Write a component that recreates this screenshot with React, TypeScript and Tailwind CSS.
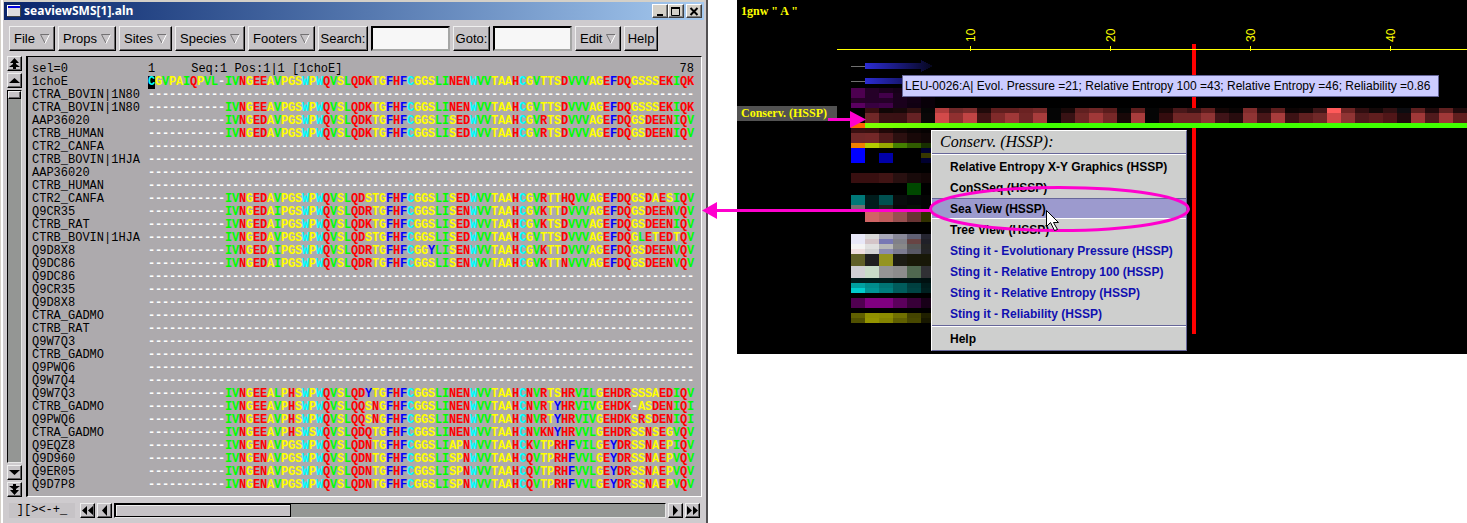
import type { ReactNode } from "react";

const residueColors: Record<string, string> = {
  A: "text-[#ffff00]", G: "text-[#ffff00]", P: "text-[#ffff00]", S: "text-[#ffff00]", T: "text-[#ffff00]",
  I: "text-[#00ff00]", L: "text-[#00ff00]", V: "text-[#00ff00]",
  D: "text-[#ff0000]", E: "text-[#ff0000]", H: "text-[#ff0000]", K: "text-[#ff0000]",
  N: "text-[#ff0000]", Q: "text-[#ff0000]", R: "text-[#ff0000]",
  F: "text-[#0000ff]", Y: "text-[#0000ff]",
  C: "text-[#00ffff]", W: "text-[#00ffff]",
};

const gap = "-".repeat(11);
const empty = "-".repeat(78);

const sequences: [string, string][] = [
  ["1choE", "CGVPAIQPVL-IVNGEEAVPGSWPWQVSLQDKTGFHFCGGSLINENWVVTAAHCGVTTSDVVVAGEFDQGSSSEKIQK"],
  ["CTRA_BOVIN|1N80", empty],
  ["CTRA_BOVIN|1N80", gap + "IVNGEEAVPGSWPWQVSLQDKTGFHFCGGSLINENWVVTAAHCGVTTSDVVVAGEFDQGSSSEKIQK"],
  ["AAP36020", gap + "IVNGEDAVPGSWPWQVSLQDKTGFHFCGGSLISEDWVVTAAHCGVRTSDVVVAGEFDQGSDEENIQV"],
  ["CTRB_HUMAN", gap + "IVNGEDAVPGSWPWQVSLQDKTGFHFCGGSLISEDWVVTAAHCGVRTSDVVVAGEFDQGSDEENIQV"],
  ["CTR2_CANFA", empty],
  ["CTRB_BOVIN|1HJA", empty],
  ["AAP36020", empty],
  ["CTRB_HUMAN", empty],
  ["CTR2_CANFA", gap + "IVNGEDAVPGSWPWQVSLQDSTGFHFCGGSLISEDWVVTAAHCGVRTTHQVVAGEFDQGSDAESIQV"],
  ["Q9CR35", gap + "IVNGEDAIPGSWPWQVSLQDRTGFHFCGGSLISENWVVTAAHCGVKTTDVVVAGEFDQGSDEENVQV"],
  ["CTRB_RAT", gap + "IVNGEDAIPGSWPWQVSLQDKTGFHFCGGSLISEDWVVTAAHCGVKTSDVVVAGEFDQGSDEENIQV"],
  ["CTRB_BOVIN|1HJA", gap + "IVNGEDAVPGSWPWQVSLQDSTGFHFCGGSLISEDWVVTAAHCGVTTSDVVVAGEFDQGLETEDTQV"],
  ["Q9D8X8", gap + "IVNGEDAIPGSWPWQVSLQDRTGFHFCGGYLISENWVVTAAHCGVKTTDVVVAGEFDQGSDEENVQV"],
  ["Q9DC86", gap + "IVNGEDAIPGSWPWQVSLQDRTGFHFCGGSLISENWVVTAAHCGVKTTNVVVAGEFDQGSDEENVQV"],
  ["Q9DC86", empty],
  ["Q9CR35", empty],
  ["Q9D8X8", empty],
  ["CTRA_GADMO", empty],
  ["CTRB_RAT", empty],
  ["Q9W7Q3", empty],
  ["CTRB_GADMO", empty],
  ["Q9PWQ6", empty],
  ["Q9W7Q4", empty],
  ["Q9W7Q3", gap + "IVNGEEALPHSWPWQVSLQDYTGFHFCGGSLINENWVVTAAHCNVRTSHRVILGEHDRSSSAEDIQV"],
  ["CTRB_GADMO", gap + "IVNGEEAVPHSWPWQVSLQQSNGFHFCGGSLINENWVVTAAHCNVRTYHRVIVGEHDK-ASDENIQI"],
  ["Q9PWQ6", gap + "IVNGEEAVPHSWPWQVSLQQSNGFHFCGGSLINENWVVTAAHCNVRTYHRVIVGEHDKSRSDENIQI"],
  ["CTRA_GADMO", gap + "IVNGEEAVPHSWSWQVSLQDQTGFHFCGGSLINENWVVTAAHCNVKNYHRVVLGEHDRSSNSEGVQV"],
  ["Q9EQZ8", gap + "IVNGENAVPGSWPWQVSLQDNTGFHFCGGSLIAPNWVVTAAHCKVTPRHFVILGEYDRSSNAEPIQV"],
  ["Q9D960", gap + "IVNGENAVPGSWPWQVSLQDNTGFHFCGGSLISPNWVVTAAHCQVTPRHFVVLGEYDRSSNAEPVQV"],
  ["Q9ER05", gap + "IVNGENAVPGSWPWQVSLQDNTGFHFCGGSLISPNWVVTAAHCQVTPRHFVVLGEYDRSSNAEPVQV"],
  ["Q9D7P8", gap + "IVNGENAVPGSWPWQVSLQDNTGFHFCGGSLISPNWVVTAAHCQVTPRHFVVLGEYDRSSNAEPVQV"],
];

const bevel = "border border-t-[#efefef] border-l-[#efefef] border-r-black border-b-black shadow-[inset_-1px_-1px_0_#636163] bg-[#c6c3c6]";

function ToolButton({ label, width, menu }: { label: string; width: string; menu?: boolean }) {
  return (
    <button className={`flex h-[25px] items-center text-[13px] leading-none text-black ${menu ? "justify-between px-1" : "justify-center"} ${bevel} ${width}`}>
      {label}
      {menu && (
        <svg width="10" height="10" viewBox="0 0 10 10" fill="none" aria-hidden="true">
          <path d="M9.5 .5H.5L5 9" stroke="#737173" />
          <path d="M9.5 .5L5 9.5" stroke="#fff" />
        </svg>
      )}
    </button>
  );
}

function ScrollButton({ label, path }: { label: string; path: string }) {
  return (
    <button aria-label={label} className={`flex size-[15px] shrink-0 items-center justify-center ${bevel}`}>
      <svg width="11" height="11" viewBox="0 0 11 11" className="shrink-0" aria-hidden="true">
        <path d={path} fill="#000" />
      </svg>
    </button>
  );
}

function WindowButton({ label, children }: { label: string; children: ReactNode }) {
  return (
    <button aria-label={label} className="flex h-[14px] w-4 items-center justify-center border border-t-white border-l-white border-r-[#404040] border-b-[#404040] bg-[#d4d0c8] shadow-[inset_-1px_-1px_0_#808080]">
      <svg width="10" height="9" viewBox="0 0 10 9" className="shrink-0" aria-hidden="true">{children}</svg>
    </button>
  );
}

function SeaView() {
  return (
    <section className="shrink-0 border-l border-[#d4d0c8] border-r-2 border-r-[#525052] bg-[#cecbce] pr-[2px]">
      <div className="border-l-2 border-l-white pl-px">
        <header className="flex h-5 items-center border-t-2 border-[#d4d0c8] bg-linear-to-r from-[#0a246a] to-[#a6caf0] pr-[2px] pl-[3px]">
          <svg width="14" height="12" viewBox="0 0 14 12" aria-hidden="true">
            <rect x=".5" y=".5" width="13" height="11" fill="#dedbde" stroke="#fff" />
            <path d="M1 1h12v2H1z" fill="#0000de" />
            <path d="M0 11.500h14M13.500 0v12" stroke="#424142" />
          </svg>
          <h1 className="ml-[3px] flex-1 font-['Noto_Sans',sans-serif] text-[12px] leading-none font-bold text-white">seaviewSMS[1].aln</h1>
          <div className="flex">
            <WindowButton label="Minimize"><path d="M2 7h6v2H2z" /></WindowButton>
            <WindowButton label="Maximize"><path d="M.5 1.500h8v7h-8z" fill="none" stroke="#000" /><path d="M0 0h9v2H0z" /></WindowButton>
            <div className="ml-[2px] flex">
              <WindowButton label="Close"><path d="M1.500 1l7 7M8.500 1l-7 7" stroke="#000" strokeWidth="2" /></WindowButton>
            </div>
          </div>
        </header>

        {/* menu bar */}
        <div className="flex gap-[3px] pt-[6px] pl-[5px]">
          <ToolButton label="File" width="w-[46px]" menu />
          <ToolButton label="Props" width="w-[58px]" menu />
          <ToolButton label="Sites" width="w-[53px]" menu />
          <ToolButton label="Species" width="w-[70px]" menu />
          <ToolButton label="Footers" width="w-[67px]" menu />
          <ToolButton label="Search:" width="w-[50px]" />
          <input aria-label="Search" className="h-[25px] w-[79px] border-2 border-t-black border-l-black border-r-[#a5a6a5] border-b-[#a5a6a5] bg-[#f7f7f7] px-1 text-[13px]" />
          <ToolButton label="Goto:" width="w-[37px]" />
          <input aria-label="Goto" className="h-[25px] w-[79px] border-2 border-t-black border-l-black border-r-[#a5a6a5] border-b-[#a5a6a5] bg-[#f7f7f7] px-1 text-[13px]" />
          <ToolButton label="Edit" width="w-[46px]" menu />
          <ToolButton label="Help" width="w-[34px]" />
        </div>

        <div className="flex gap-1 pt-[5px] pr-[2px] pl-[3px]">
          <div className="flex flex-col gap-[2px]">
            <ScrollButton label="First sequence" path="M5.500 0L1 5h3v1L0 9h4v2h3V9h4L7 6V5h3z" />
            <ScrollButton label="Scroll up" path="M5.500 3L0 8h11z" />
            <div className="flex-1 border border-t-black border-l-black border-r-[#e7e7e7] border-b-[#e7e7e7] bg-[#949694]">
              <div className={`h-[8px] ${bevel}`} />
            </div>
            <ScrollButton label="Scroll down" path="M5.500 8L0 3h11z" />
            <ScrollButton label="Last sequence" path="M5.500 11L1 6h3V5L0 2h4V0h3v2h4L7 5v1h3z" />
          </div>

          <div className="border-t border-r border-b border-l-2 border-t-black border-r-white border-b-white border-l-black bg-[#adaaad] pt-[6px] pr-[7px] pb-1 pl-1 font-['Liberation_Mono',monospace] text-[12px] leading-[13px]">
            <div className="flex whitespace-pre">
              <span className="w-[116px]">sel=0</span>
              <span className="flex-1">1     Seq:1 Pos:1|1 [1choE]</span>
              <span>78</span>
            </div>
            {sequences.map(([name, residues], i) => (
              <div key={i} className="flex h-[13px]">
                <span className="w-[116px]">{name}</span>
                <div className="flex font-bold">
                  {residues.split("").map((r, j) => (
                    <span
                      key={j}
                      className={`flex w-[7px] justify-center ${residueColors[r] ?? "text-white"} ${i === 0 && j === 0 ? "bg-black" : ""}`}
                    >
                      {r}
                    </span>
                  ))}
                </div>
              </div>
            ))}
          </div>
        </div>

        <div className="flex items-center gap-[2px] pt-[6px] pr-1 pb-[5px] pl-[5px]">
          <span className="mr-[3px] w-[66px] bg-[#c6c3c6] text-center font-['Liberation_Mono',monospace] text-[12px] leading-[15px]">{"][><-+_"}</span>
          <ScrollButton label="First site" path="M0 5.500L5 1v9zM6 5.500L11 1v9z" />
          <ScrollButton label="Scroll left" path="M3 5.500L8 0v11z" />
          <div className="h-[15px] flex-1 border border-t-black border-l-black border-r-[#e7e7e7] border-b-[#e7e7e7] bg-[#949694]">
            <div className="h-[13px] w-[176px] border border-black bg-[#c6c3c6] shadow-[inset_1px_1px_0_#efefef]" />
          </div>
          <ScrollButton label="Scroll right" path="M8 5.500L3 0v11z" />
          <ScrollButton label="Last site" path="M5 5.500L0 1v9zM11 5.500L6 1v9z" />
        </div>
      </div>
    </section>
  );
}

// [top half, bottom half] of every residue in the conservation band
const conservation = [
  ["#000", "#000"], ["#380f10", "#702828"], ["#100606", "#3a1214"], ["#160808", "#3a1114"], ["#301010", "#662224"],
  ["#060606", "#0a0808"], ["#b03c3c", "#d24a4a"], ["#6e2828", "#903030"], ["#7c2c2c", "#c04444"], ["#200a0a", "#401414"],
  ["#601e1e", "#802a2a"], ["#601e1e", "#a03838"], ["#6a2222", "#702626"], ["#762828", "#a83c3c"], ["#050505", "#050505"],
  ["#180808", "#381214"], ["#602020", "#702626"], ["#6e2626", "#a03838"], ["#5a1c1c", "#782828"], ["#050505", "#180808"],
  ["#601e1e", "#a83c3c"], ["#050505", "#050505"], ["#180606", "#340c0e"], ["#4a181a", "#702626"], ["#381214", "#702626"],
  ["#601e1e", "#903434"], ["#140606", "#401418"], ["#080404", "#280c0e"], ["#802c2c", "#903434"], ["#200a0c", "#481618"],
  ["#601e1e", "#a83c3c"], ["#0c0404", "#3c1214"], ["#100606", "#602020"], ["#401618", "#702828"], ["#ff5a5a", "#d24848"],
  ["#6e2424", "#903434"], ["#300e10", "#501a1c"], ["#120808", "#601e1e"], ["#301012", "#501618"], ["#0c0c10", "#200a0c"],
  ["#602020", "#a03838"], ["#200a0c", "#501a1c"], ["#602020", "#a03838"], ["#200a0c", "#601e1e"],
];

// property bands to the left of the menu: y, height, colour of each column
const bands: [number, number, string[]][] = [
  [88, 5, ["#4d0050", "#250028", "#1c001e", "#160018", "#100012", "#080008"]],
  [93, 5, ["#4d0050", "#250028", "#42004a", "#1a001c", "#120014", "#080008"]],
  [98, 5, ["#280028", "#250028", "#250028", "#1a001c", "#120014", "#080008"]],
  [103, 5, ["#5a0060", "#380040", "#400048", "#1a001c", "#100012", "#080008"]],
  [123, 5, ["#ff6600"]],
  [128, 5, ["#3a1012", "#38100f", "#200808", "#120606", "#0a0404", "#060202"]],
  [133, 10, ["#702828", "#742828", "#4e1a1a", "#2c1010", "#180808", "#100606"]],
  [143, 5, ["#f08000", "#b4cc00", "#98a800", "#448000", "#305c00", "#183000"]],
  [148, 5, ["#0000ff", "#000", "#000", "#000", "#000", "#000030"]],
  [153, 5, ["#0000ff", "#000", "#0000a8", "#000", "#000", "#383800"]],
  [158, 5, ["#0000ff", "#000", "#0000a8", "#000", "#000", "#000030"]],
  [173, 10, ["#380f10", "#380f10", "#401414", "#281010", "#180a0a", "#120606"]],
  [183, 12, ["#000", "#000", "#000", "#000", "#004800", "#000"]],
  [195, 10, ["#007878", "#001c1c", "#005050", "#080c0c", "#040808", "#040404"]],
  [205, 5, ["#707070", "#001c1c", "#202020", "#080808", "#061006", "#040404"]],
  [212, 10, ["#000", "#d06464", "#c05c5c", "#985050", "#683434", "#303000"]],
  [234, 5, ["#e8e8f8", "#d8d8d8", "#a8a8b8", "#888898", "#606074", "#242430"]],
  [239, 5, ["#e8e8f8", "#d4c4c8", "#7878b4", "#808088", "#684444", "#202028"]],
  [244, 5, ["#f4f4f4", "#e0e0e0", "#b8b8b8", "#888888", "#585858", "#242424"]],
  [249, 5, ["#f0e0e0", "#d4d4d4", "#8c8cb0", "#7c7c90", "#585864", "#242428"]],
  [254, 12, ["#606028", "#202020", "#949420", "#1c1c14", "#181808", "#181808"]],
  [266, 12, ["#d0d0d4", "#c8dcc8", "#949494", "#8c8c8c", "#506850", "#303034"]],
  [278, 5, ["#001c1c", "#001c1c", "#001c1c", "#001414", "#001414", "#001010"]],
  [283, 5, ["#00a0a0", "#008c8c", "#007474", "#005c5c", "#004040", "#001c1c"]],
  [288, 5, ["#00cccc", "#009494", "#007c7c", "#005c5c", "#004444", "#002020"]],
  [298, 10, ["#500050", "#800080", "#800080", "#5c005c", "#380038", "#180018"]],
  [313, 5, ["#606000", "#909000", "#8c8c00", "#707000", "#444400", "#202000"]],
  [318, 5, ["#505000", "#949400", "#848400", "#606000", "#484800", "#181800"]],
];

const ticks = [10, 20, 30, 40];

function Heatmap() {
  return (
    <svg width="100%" height="354" className="block" aria-hidden="true" shapeRendering="crispEdges">
      <defs>
        <linearGradient id="strand">
          <stop offset="0" stopColor="#2c2cd4" />
          <stop offset="1" stopColor="#06061c" />
        </linearGradient>
        <linearGradient id="reliability" gradientUnits="userSpaceOnUse" x1="128" x2="290">
          <stop offset="0" stopColor="#80ff00" />
          <stop offset="1" stopColor="#40ff00" />
        </linearGradient>
      </defs>

      <rect x="455" y="44" width="4" height="290" fill="#f00" />
      <rect x="100" y="49" width="100%" height="1" fill="#ff0" />
      {ticks.map((t) => (
        <g key={t} fill="#ff0">
          <rect x={93 + t * 14} y="46" width="1" height="5" />
          <text transform={`translate(${98 + t * 14} 42) rotate(-90)`} fontSize="12">{t}</text>
        </g>
      ))}

      <path d="M114 66.500h14M114 81.500h14" stroke="#707070" />
      <path d="M128 63h56v-3l12 6-12 6v-3h-56zM128 78h56v6h-56z" fill="url(#strand)" />

      {bands.map(([y, h, colors]) =>
        colors.map((c, i) => <rect key={`${y}-${i}`} x={114 + i * 14} y={y} width="14" height={h} fill={c} />)
      )}
      {conservation.map(([top, bottom], i) => (
        <g key={i}>
          <rect x={114 + i * 14} y="108" width="14" height="5" fill={top} />
          <rect x={114 + i * 14} y="113" width="14" height="10" fill={bottom} />
        </g>
      ))}
      <rect x="128" y="123" width="100%" height="5" fill="url(#reliability)" />
    </svg>
  );
}

const entries = [
  { label: "Relative Entropy X-Y Graphics (HSSP)", style: "border-transparent text-black" },
  { label: "ConSSeq (HSSP)", style: "border-transparent text-black" },
  { label: "Sea View (HSSP)", style: "border-t-[#666699] border-b-white bg-[#9c9ace] text-black" },
  { label: "Tree View (HSSP)", style: "border-transparent text-black" },
  { label: "Sting it - Evolutionary Pressure (HSSP)", style: "border-transparent text-[#1010b0]" },
  { label: "Sting it - Relative Entropy 100 (HSSP)", style: "border-transparent text-[#1010b0]" },
  { label: "Sting it - Relative Entropy (HSSP)", style: "border-transparent text-[#1010b0]" },
  { label: "Sting it - Reliability (HSSP)", style: "border-transparent text-[#1010b0]" },
];

const entryBase = "block h-[21px] w-full border-y pl-[18px] text-left text-[12px] leading-5 font-bold";

function ContextMenu() {
  return (
    <div className="absolute top-[130px] left-[194px] w-[256px] border border-t-white border-l-white border-r-[#666699] border-b-[#666699] bg-[#cecfce]">
      <h2 className="h-[22px] pl-2 font-['Liberation_Serif',serif] text-[16px] leading-[22px] text-black italic">Conserv. (HSSP):</h2>
      <div className="h-[2px] border-t border-b border-t-[#666699] border-b-white" />
      <ul className="py-px">
        {entries.map((e) => (
          <li key={e.label}>
            <button className={`${entryBase} ${e.style}`}>{e.label}</button>
          </li>
        ))}
      </ul>
      <div className="h-[2px] border-t border-b border-t-[#666699] border-b-white" />
      <div className="py-px">
        <button className={`${entryBase} border-transparent text-black`}>Help</button>
      </div>
    </div>
  );
}

function StingPanel() {
  return (
    <section className="relative ml-[29px] min-w-0 flex-1 overflow-hidden bg-black">
      <Heatmap />
      <h2 className="absolute top-[3px] left-1 font-['Liberation_Serif',serif] text-[12px] leading-4 font-bold text-[#ffff00]">1gnw &quot; A &quot;</h2>
      <div className="absolute top-[106px] left-0 w-[100px] bg-[#525252] pl-1 font-['Liberation_Serif',serif] text-[12px] leading-[15px] font-bold text-[#ffff00]">
        Conserv. (HSSP)
      </div>
      <div className="absolute top-[75px] left-[165px] border border-[#666699] bg-[#ccccff] pr-2 pl-[2px] text-[12px] leading-5 whitespace-nowrap text-black">
        LEU-0026:A| Evol. Pressure =21; Relative Entropy 100 =43; Relative Entropy =46; Reliability =0.86
      </div>
      <ContextMenu />
    </section>
  );
}

export default function App() {
  return (
    <main className="relative flex items-start overflow-hidden bg-white font-['Liberation_Sans',sans-serif] text-black">
      <SeaView />
      <StingPanel />

      {/* callout arrows, ellipse and mouse pointer */}
      <svg className="pointer-events-none absolute inset-0 size-full" aria-hidden="true">
        <g fill="none" stroke="#ff00ce" strokeWidth="3">
          <path d="M828 119.500h24M716 210.500h214" />
          <ellipse cx="1059.500" cy="209" rx="129" ry="21.500" />
        </g>
        <path d="M850 111l16 8.500-16 8.500zM717 202l-15 8.500 15 8.500z" fill="#ff00ce" />
        <path d="M1046.500 210.500v16l4-4 4 8 3-1-4-7h5z" fill="#fff" stroke="#000" />
      </svg>
    </main>
  );
}
